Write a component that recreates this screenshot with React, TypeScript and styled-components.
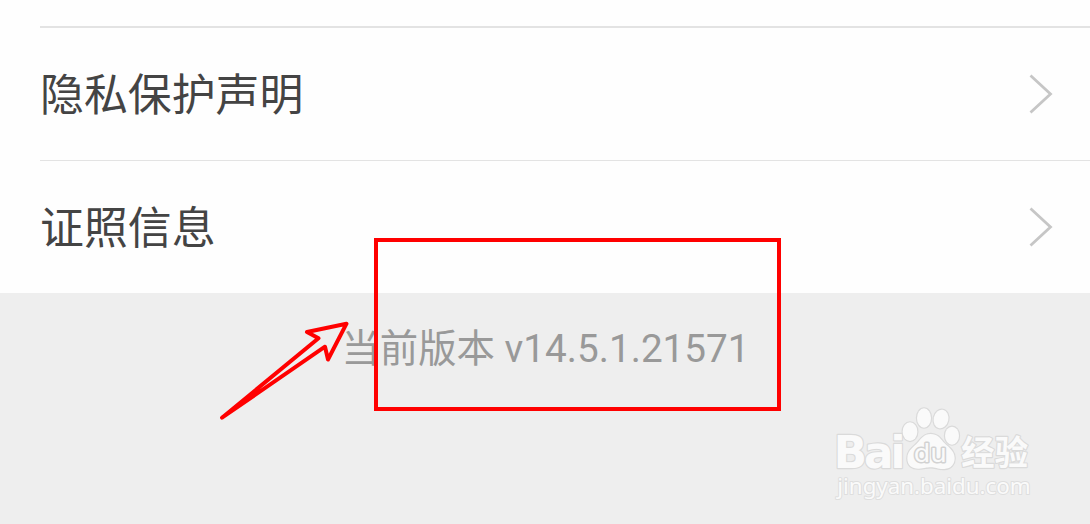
import React from 'react';
import styled, { createGlobalStyle } from 'styled-components';

const GlobalStyle = createGlobalStyle`
  body { margin: 0; background: #eeeeee; }
  * { box-sizing: border-box; }
`;

const Screen = styled.main`
  position: relative;
  width: 1090px;
  height: 524px;
  overflow: hidden;
  background: #eeeeee;
  font-family: Roboto, 'Noto Sans CJK SC', sans-serif;
`;

const List = styled.section`
  height: 293px;
  padding: 26px 0 0 40px;
  background: #fefefe;
`;

const Row = styled.div<{ $line: number }>`
  display: flex;
  align-items: center;
  justify-content: space-between;
  height: ${({ $line }) => ($line === 2 ? 134 : 133)}px;
  padding-right: 37px;
  border-top: ${({ $line }) => $line}px solid #e3e3e3;
`;

const Label = styled.span`
  padding-top: 3px;
  font-size: 43.9px;
  line-height: 64px;
  color: #444444;
`;

const Chevron = styled.svg`
  width: 24px;
  height: 40px;
  fill: none;
  stroke: #c6c6c6;
  stroke-width: 2.8;
`;

const Version = styled.footer`
  display: flex;
  align-items: baseline;
  justify-content: center;
  padding: 28px 0 0 1px;
  font-size: 38.4px;
  line-height: 56px;
  white-space: pre;
  color: #999999;
`;

const VersionNumber = styled.span`
  font-size: 38.7px;
`;

const Highlight = styled.div`
  position: absolute;
  left: 374px;
  top: 238px;
  width: 407px;
  height: 173px;
  border: 4px solid #ff0000;
`;

const Arrow = styled.svg`
  position: absolute;
  left: 210px;
  top: 310px;
  width: 150px;
  height: 120px;
  fill: none;
  stroke: #ff0000;
  stroke-width: 4;
  stroke-linejoin: round;
`;

const Watermark = styled.svg`
  position: absolute;
  left: 820px;
  top: 395px;
  width: 230px;
  height: 120px;
  fill: #fafafa;
  stroke: #dadada;
  stroke-width: 7;
  stroke-linejoin: round;
  paint-order: stroke;
`;

const rows = [
  { label: '隐私保护声明', line: 2 },
  { label: '证照信息', line: 1 },
];

export default function App() {
  return (
    <>
      <GlobalStyle />
      <Screen>
        <List>
          {rows.map(({ label, line }) => (
            <Row key={label} $line={line}>
              <Label>{label}</Label>
              <Chevron viewBox="0 0 24 40">
                <path d="M1.5 1.5 21.5 20 1.5 38.5" />
              </Chevron>
            </Row>
          ))}
        </List>
        <Version>
          <span>当前版本</span>
          <VersionNumber> v14.5.1.21571</VersionNumber>
        </Version>
        <Highlight />
        <Arrow viewBox="210 310 150 120">
          <path d="M222 417.7 318.5 338.3 307 332 346.5 323.7 328 359.5 325 346.7Z" />
        </Arrow>
        <Watermark viewBox="0 0 690 360">
          <text x="41" y="218" fontFamily="DejaVu Sans, sans-serif" fontWeight="700" fontSize="131" letterSpacing="-9">Bai</text>
          <ellipse cx="270" cy="110" rx="22" ry="28" />
          <ellipse cx="312" cy="69" rx="21" ry="29" />
          <ellipse cx="363" cy="72" rx="22" ry="28" transform="rotate(12 363 72)" />
          <ellipse cx="396" cy="122" rx="21" ry="27" />
          <path d="M332 117C311 117 303 132 294 142C282 156 262 165 262 190C262 213 278 222 297 221C314 220 320 217 332 217C347 217 354 223 373 222C394 221 404 207 404 190C404 165 381 154 370 141C361 130 352 117 332 117Z" />
          <text x="281" y="202" fontFamily="DejaVu Sans, sans-serif" fontSize="76" textLength="100" lengthAdjust="spacingAndGlyphs" stroke="#d2d2d2" strokeWidth="9">du</text>
          <text x="424" y="211" fontFamily="Noto Sans CJK SC, sans-serif" fontWeight="700" fontSize="101" textLength="200" lengthAdjust="spacingAndGlyphs">经验</text>
          <text x="52" y="297" fontFamily="Noto Sans, sans-serif" fontSize="66" textLength="580" lengthAdjust="spacingAndGlyphs" stroke="#dedede" strokeWidth="6">jingyan.baidu.com</text>
        </Watermark>
      </Screen>
    </>
  );
}
